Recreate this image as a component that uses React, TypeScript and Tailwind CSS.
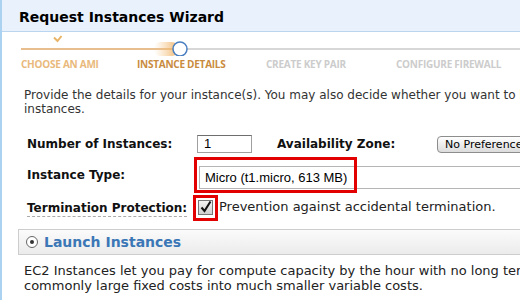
export default function App() {
  const verdana = "font-['DejaVu_Sans',Verdana,sans-serif]"
  return (
    <div className={`relative w-[520px] h-[300px] overflow-hidden bg-white border-l-2 border-[#acd2f2] ${verdana}`}>
      <div className="h-[32px] bg-[#e8f1fc] border-b border-[#b9d5f0] pl-[17px] pt-[8px]">
        <h1 className="text-[14px] leading-[18px] font-bold text-black">Request Instances Wizard</h1>
      </div>

      <svg width="518" height="24" className="block">
        <defs>
          <linearGradient id="glow" x1="0" x2="1" y1="0" y2="0">
            <stop offset="0" stopColor="#f5c88a" stopOpacity="0" />
            <stop offset="1" stopColor="#f0b060" stopOpacity="0.9" />
          </linearGradient>
        </defs>
        <path d="M52 5.5 L55.5 9 L59.5 4" fill="none" stroke="#e8b468" strokeWidth="2" />
        <line x1="19" y1="17" x2="172" y2="17" stroke="#e0a86a" strokeWidth="1.3" />
        <line x1="185" y1="17" x2="518" y2="17" stroke="#cacaca" strokeWidth="1.3" />
        <rect x="152" y="10" width="24" height="14" rx="6" fill="url(#glow)" />
        <circle cx="178" cy="17" r="7" fill="white" stroke="#4a7fc1" strokeWidth="1.5" />
      </svg>

      <div className="flex mt-[2px] pl-[19px] text-[10px] leading-[12px] font-bold font-['Open_Sans',sans-serif] tracking-[-0.25px]">
        <span className="w-[116px] shrink-0 text-[#e9b97c]">CHOOSE AN AMI</span>
        <span className="w-[129px] shrink-0 text-[#c98b3e]">INSTANCE DETAILS</span>
        <span className="w-[130px] shrink-0 text-[#cccccc]">CREATE KEY PAIR</span>
        <span className="shrink-0 text-[#cccccc]">CONFIGURE FIREWALL</span>
      </div>

      <p className="mt-[18px] pl-[22px] text-[12px] leading-[14px] text-[#333] whitespace-nowrap">
        Provide the details for your instance(s). You may also decide whether you want to launch your
        <br />
        instances.
      </p>

      <div className="mt-[19px] pl-[25px] flex items-center h-[18px]">
        <span className="w-[170px] shrink-0 text-[12px] font-bold text-[#111]">Number of Instances:</span>
        <span className="w-[55px] shrink-0 h-[18px] border border-[#a0a0a0] border-t-[#6e6e6e] pl-[6px] text-[13px] leading-[16px] font-['Liberation_Sans',Arial,sans-serif] text-black">
          1
        </span>
        <span className="ml-[25px] w-[160px] shrink-0 text-[12px] font-bold text-[#111]">Availability Zone:</span>
        <span className="shrink-0 h-[17px] px-[7px] rounded-[4px] border border-[#8d8d8d] bg-gradient-to-b from-white to-[#dcdcdc] text-[11px] leading-[15px] text-black whitespace-nowrap">
          No Preference
        </span>
      </div>

      <div className="mt-[13px] pl-[25px] flex items-center h-[23px]">
        <span className="w-[172px] shrink-0 text-[12px] font-bold text-[#111] -mt-[5px]">Instance Type:</span>
        <span className="flex-1 h-[23px] border border-r-0 border-[#b5b5b5] pl-[5px] text-[13px] leading-[21px] font-['Liberation_Sans',Arial,sans-serif] text-black whitespace-nowrap">
          Micro (t1.micro, 613 MB)
        </span>
      </div>

      <div className="mt-[10px] pl-[25px] flex items-center h-[16px]">
        <span className="w-[171px] shrink-0">
          <span className="text-[12px] font-bold text-[#111] border-b border-dashed border-[#aaa] pb-[1px]">
            Termination Protection:
          </span>
        </span>
        <span className="w-[15px] h-[15px] shrink-0 border border-[#777] bg-gradient-to-b from-[#f4f4f4] to-[#cfcfcf] flex items-center justify-center">
          <svg width="13" height="13" viewBox="0 0 13 13">
            <path d="M2.5 6.5 L5.5 10 L11.5 0.5" fill="none" stroke="#111" strokeWidth="2" />
          </svg>
        </span>
        <span className="ml-[6px] text-[13px] text-[#222] whitespace-nowrap">
          Prevention against accidental termination.
        </span>
      </div>

      <div className="mt-[14px] ml-[16px] h-[26px] border border-r-0 border-[#cdcdcd] bg-gradient-to-b from-[#fbfbfb] to-[#ebebeb] flex items-center pl-[7px]">
        <span className="w-[12px] h-[12px] rounded-full border border-[#666] bg-white flex items-center justify-center">
          <span className="w-[4px] h-[4px] rounded-full bg-[#333]" />
        </span>
        <span className="ml-[6px] text-[14px] font-bold text-[#3b77b6]">Launch Instances</span>
      </div>

      <p className="mt-[8px] pl-[22px] text-[13px] leading-[15px] text-[#222] whitespace-nowrap">
        EC2 Instances let you pay for compute capacity by the hour with no long term commitments. This transforms what are
        <br />
        commonly large fixed costs into much smaller variable costs.
      </p>

      <div className="absolute left-[192px] top-[157px] w-[163px] h-[36px] border-[3px] border-[#e30000]" />
      <div className="absolute left-[191px] top-[195px] w-[25px] h-[26px] border-[3px] border-[#e30000]" />
    </div>
  )
}
